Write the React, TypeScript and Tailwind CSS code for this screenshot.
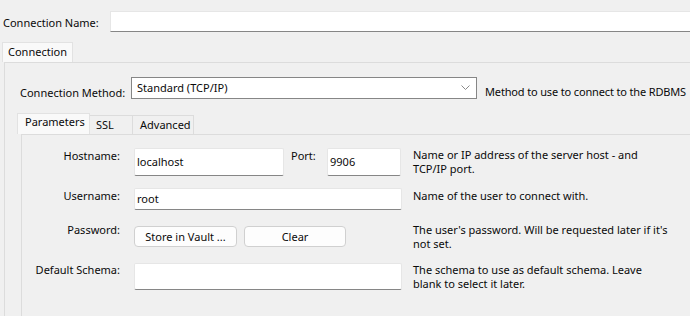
import React from "react";

const edit =
  "bg-white border border-[#e6e6e6] border-b-[#868686] rounded-[2px]";
const btn =
  "h-[21px] bg-[#fdfdfd] border border-[#d0d0d0] rounded-[4px] flex items-center justify-center leading-[14px]";

const Chevron = () => (
  <svg width="9" height="6" viewBox="0 0 9 6" className="mr-[6px]">
    <path d="M0.5 0.5 L4.5 4.5 L8.5 0.5" fill="none" stroke="#8a8a8a" strokeWidth="1" />
  </svg>
);

const App = () => {
  return (
    <div className="w-[690px] h-[316px] overflow-hidden bg-[#f0f0f0] text-[11px] leading-[14px] text-[#0a0a0a] font-['Noto_Sans',sans-serif]">
      {/* connection name */}
      <div className="flex items-start pt-[11px]">
        <span className="w-[110px] pl-[3px] mt-[5px] whitespace-nowrap">Connection Name:</span>
        <div className={`h-[21px] flex-1 ${edit} rounded-none border-r-0`} />
      </div>

      {/* outer tab */}
      <div className="mt-[10px] pl-[2px] flex">
        <div className="h-[20px] w-[71px] bg-[#f9f9f9] border border-b-0 border-[#e2e2e2] pl-[5px] pt-[2px]">
          Connection
        </div>
      </div>

      <div className="ml-[4px] border-l border-t border-[#dcdcdc] pt-[14px] pl-[12px]">
        {/* method row */}
        <div className="flex items-start ml-[3px]">
          <span className="w-[111px] mt-[9px] whitespace-nowrap">Connection Method:</span>
          <div className="w-[346px] h-[22px] bg-white border border-[#868686] flex items-center justify-between pl-[5px]">
            <span>Standard (TCP/IP)</span>
            <Chevron />
          </div>
          <span className="ml-[8px] mt-[8px] whitespace-nowrap tracking-[-0.15px]">
            Method to use to connect to the RDBMS
          </span>
        </div>

        {/* inner tabs */}
        <div className="flex items-end mt-[13px]">
          <div className="h-[21px] w-[73px] bg-[#f9f9f9] border border-b-0 border-[#e2e2e2] pl-[7px] pt-[1px]">
            Parameters
          </div>
          <div className="h-[19px] w-[43px] border-t border-r border-[#dcdcdc] pl-[6px] pt-[2px]">SSL</div>
          <div className="h-[19px] w-[61px] border-t border-r border-[#dcdcdc] pl-[7px] pt-[2px]">Advanced</div>
        </div>

        {/* inner panel */}
        <div className="ml-[4px] border-l border-t border-[#dcdcdc] h-[200px]">
          <div className="flex items-start mt-[13px]">
            <span className="w-[98px] text-right mt-[1px] whitespace-nowrap">Hostname:</span>
            <div className={`ml-[14px] w-[150px] h-[28px] ${edit} flex items-center pl-[2px]`}>localhost</div>
            <span className="ml-[7px] w-[36px] mt-[1px]">Port:</span>
            <div className={`w-[74px] h-[28px] ${edit} flex items-center pl-[2px]`}>9906</div>
            <span className="ml-[12px] whitespace-nowrap">
              Name or IP address of the server host - and
              <br />
              TCP/IP port.
            </span>
          </div>

          <div className="flex items-start mt-[12px]">
            <span className="w-[98px] text-right mt-[1px] whitespace-nowrap">Username:</span>
            <div className={`ml-[14px] w-[268px] h-[22px] ${edit} flex items-center pl-[2px]`}>root</div>
            <span className="ml-[11px] mt-[1px] whitespace-nowrap">Name of the user to connect with.</span>
          </div>

          <div className="flex items-start mt-[13px]">
            <span className="w-[98px] text-right whitespace-nowrap">Password:</span>
            <button className={`ml-[14px] w-[103px] mt-[3px] ${btn}`}>Store in Vault ...</button>
            <button className={`ml-[7px] w-[102px] mt-[3px] ${btn}`}>Clear</button>
            <span className="ml-[67px] whitespace-nowrap">
              The user's password. Will be requested later if it's
              <br />
              not set.
            </span>
          </div>

          <div className="flex items-start mt-[12px]">
            <span className="w-[98px] text-right whitespace-nowrap">Default Schema:</span>
            <div className={`ml-[14px] w-[268px] h-[27px] ${edit}`} />
            <span className="ml-[11px] whitespace-nowrap">
              The schema to use as default schema. Leave
              <br />
              blank to select it later.
            </span>
          </div>
        </div>
      </div>
    </div>
  );
};

export default App;
